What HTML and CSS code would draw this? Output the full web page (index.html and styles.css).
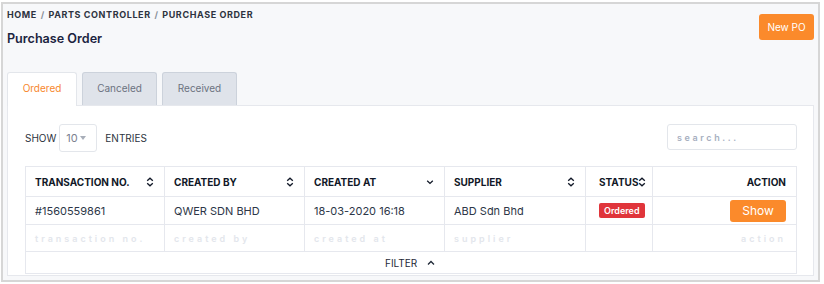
FILE: index.html
```html
<!DOCTYPE html>
<html lang="en">
<head>
    <meta charset="UTF-8">
    <meta name="viewport" content="width=device-width, initial-scale=1.0">
    <title>Purchase Order</title>
    <link rel="stylesheet" href="styles.css">
</head>
<body>

<div class="frame">
    <!-- header -->
    <div class="page-head">
        <div>
            <div class="breadcrumb">HOME <span class="sep">/</span> PARTS CONTROLLER <span class="sep">/</span> PURCHASE ORDER</div>
            <h1 class="page-title">Purchase Order</h1>
        </div>
        <button class="btn-orange new-po">New PO</button>
    </div>

    <!-- tabs -->
    <div class="tabs">
        <div class="tab active">Ordered</div>
        <div class="tab">Canceled</div>
        <div class="tab">Received</div>
    </div>

    <div class="card">
        <div class="controls">
            <div class="show-entries">
                <span>SHOW</span>
                <div class="select">10 <span class="caret"></span></div>
                <span>ENTRIES</span>
            </div>
            <input class="search" type="text" placeholder="search...">
        </div>

        <table class="po-table">
            <thead>
                <tr>
                    <th class="w1"><div class="th-in">TRANSACTION NO. <svg class="sort" viewBox="0 0 8 10"><path d="M1.2 3.8 L4 1.2 L6.8 3.8 M1.2 6.2 L4 8.8 L6.8 6.2"/></svg></div></th>
                    <th class="w2"><div class="th-in">CREATED BY <svg class="sort" viewBox="0 0 8 10"><path d="M1.2 3.8 L4 1.2 L6.8 3.8 M1.2 6.2 L4 8.8 L6.8 6.2"/></svg></div></th>
                    <th class="w3"><div class="th-in">CREATED AT <svg class="sort" viewBox="0 0 8 10"><path d="M1.2 3.8 L4 6.4 L6.8 3.8"/></svg></div></th>
                    <th class="w4"><div class="th-in">SUPPLIER <svg class="sort" viewBox="0 0 8 10"><path d="M1.2 3.8 L4 1.2 L6.8 3.8 M1.2 6.2 L4 8.8 L6.8 6.2"/></svg></div></th>
                    <th class="w5 status-col"><div class="th-in start">STATUS<svg class="sort" viewBox="0 0 8 10"><path d="M1.2 3.8 L4 1.2 L6.8 3.8 M1.2 6.2 L4 8.8 L6.8 6.2"/></svg></div></th>
                    <th class="right">ACTION</th>
                </tr>
            </thead>
            <tbody>
                <tr class="data-row">
                    <td>#1560559861</td>
                    <td>QWER SDN BHD</td>
                    <td>18-03-2020 16:18</td>
                    <td>ABD Sdn Bhd</td>
                    <td class="status-col"><span class="badge">Ordered</span></td>
                    <td class="right"><button class="btn-orange show-btn">Show</button></td>
                </tr>
                <tr class="filter-row">
                    <td>transaction no.</td>
                    <td>created by</td>
                    <td>created at</td>
                    <td>supplier</td>
                    <td></td>
                    <td class="right">action</td>
                </tr>
                <tr class="footer-row">
                    <td colspan="6">FILTER <svg class="up" viewBox="0 0 10 8"><path d="M2 5.5 L5 2.5 L8 5.5"/></svg></td>
                </tr>
            </tbody>
        </table>
    </div>
</div>

</body>
</html>
```

FILE: styles.css
```css
body {
    margin: 0;
    background-color: #fff;
    font-family: Inter, "Noto Sans", Arial, sans-serif;
    color: #1f2937;
}
.frame {
    margin: 2px 4px 2px 1px;
    height: 276px;
    border: 2px solid #d6d6d6;
    background-color: #f7f8fa;
    padding: 0 4px 0 4px;
    box-sizing: content-box;
}
.page-head {
    display: flex;
    justify-content: space-between;
    align-items: flex-start;
}
.breadcrumb {
    font-size: 9px;
    font-weight: 700;
    letter-spacing: 0.6px;
    line-height: 14px;
    padding-top: 4px;
    color: #2d3340;
}
.breadcrumb .sep {
    color: #8a909a;
    margin: 0 1px;
}
.page-title {
    margin: 7px 0 0 0;
    font-size: 12.6px;
    line-height: 20px;
    font-weight: 600;
    color: #1b2440;
}
.btn-orange {
    background-color: #fb8a2b;
    color: #fff;
    border: none;
    border-radius: 3px;
    font-family: inherit;
    cursor: pointer;
}
.new-po {
    margin-top: 10px;
    width: 55px;
    height: 26px;
    font-size: 10px;
}
.tabs {
    display: flex;
    gap: 5px;
    margin-top: 23px;
    position: relative;
    z-index: 1;
}
.tab {
    height: 33px;
    line-height: 30px;
    text-align: center;
    font-size: 10px;
    color: #6b7280;
    background-color: #dfe3ea;
    border: 1px solid #ccd2db;
    border-bottom: none;
    border-radius: 3px 3px 0 0;
    box-sizing: border-box;
    width: 75px;
}
.tab.active {
    width: 70px;
    height: 34px;
    background-color: #fff;
    color: #f7872e;
    border-color: #e3e6eb;
}
.card {
    margin-top: -1px;
    background-color: #fff;
    border: 1px solid #e6e8ed;
    padding: 18px 16px 3px 17px;
    height: 171px;
    box-sizing: border-box;
}
.controls {
    display: flex;
    justify-content: space-between;
    align-items: center;
    height: 28px;
}
.show-entries {
    display: flex;
    align-items: center;
    font-size: 10px;
    color: #2d3340;
}
.select {
    width: 38px;
    height: 28px;
    box-sizing: border-box;
    border: 1px solid #e3e6eb;
    border-radius: 3px;
    font-size: 11px;
    color: #7b8190;
    display: flex;
    align-items: center;
    padding-left: 6px;
    gap: 2px;
    margin: 0 8px 0 3px;
}
.caret {
    width: 0;
    height: 0;
    border-left: 3px solid transparent;
    border-right: 3px solid transparent;
    border-top: 4px solid #a8aeb9;
}
.search {
    width: 130px;
    height: 26px;
    box-sizing: border-box;
    border: 1px solid #e3e6eb;
    border-radius: 3px;
    padding: 0 9px;
    font-family: inherit;
    font-size: 9px;
    letter-spacing: 2.6px;
    font-weight: 600;
    color: #1f2937;
    margin-top: -2px;
}
.search::placeholder {
    color: #a7afbf;
}
.po-table {
    margin-top: 14px;
    width: 100%;
    border-collapse: collapse;
    border: 1px solid #e6e8ee;
    table-layout: fixed;
}
.po-table th,
.po-table td {
    border: 1px solid #e6e8ee;
    text-align: left;
    padding: 0 10px 0 9px;
    box-sizing: border-box;
}
.po-table th {
    height: 30px;
    font-size: 10px;
    font-weight: 700;
    color: #111827;
}
.w1 { width: 139px; }
.w2, .w3 { width: 140px; }
.w4 { width: 141px; }
.w5 { width: 67px; }
.po-table .status-col {
    padding-left: 13px;
    padding-right: 4px;
}
.po-table .right {
    text-align: right;
}
.th-in {
    display: flex;
    justify-content: space-between;
    align-items: center;
}
.th-in.start {
    justify-content: flex-start;
}
.sort {
    width: 8px;
    height: 10px;
    fill: none;
    stroke: #111827;
    stroke-width: 1.3;
}
.data-row td {
    height: 28px;
    font-size: 11px;
    color: #2d3748;
}
.badge {
    display: inline-block;
    background-color: #e0353b;
    color: #fff;
    font-size: 9px;
    font-weight: 600;
    padding: 2px 5px;
    border-radius: 2px;
}
.show-btn {
    width: 56px;
    height: 22px;
    font-size: 12px;
    vertical-align: middle;
}
.filter-row td {
    height: 27px;
    font-size: 9px;
    font-weight: 600;
    letter-spacing: 3px;
    color: #e3e6ec;
}
.footer-row td {
    height: 22px;
    text-align: center;
    font-size: 10px;
    color: #1f2937;
}
.up {
    width: 10px;
    height: 8px;
    fill: none;
    stroke: #1f2937;
    stroke-width: 1.3;
    margin-left: 6px;
}
```
